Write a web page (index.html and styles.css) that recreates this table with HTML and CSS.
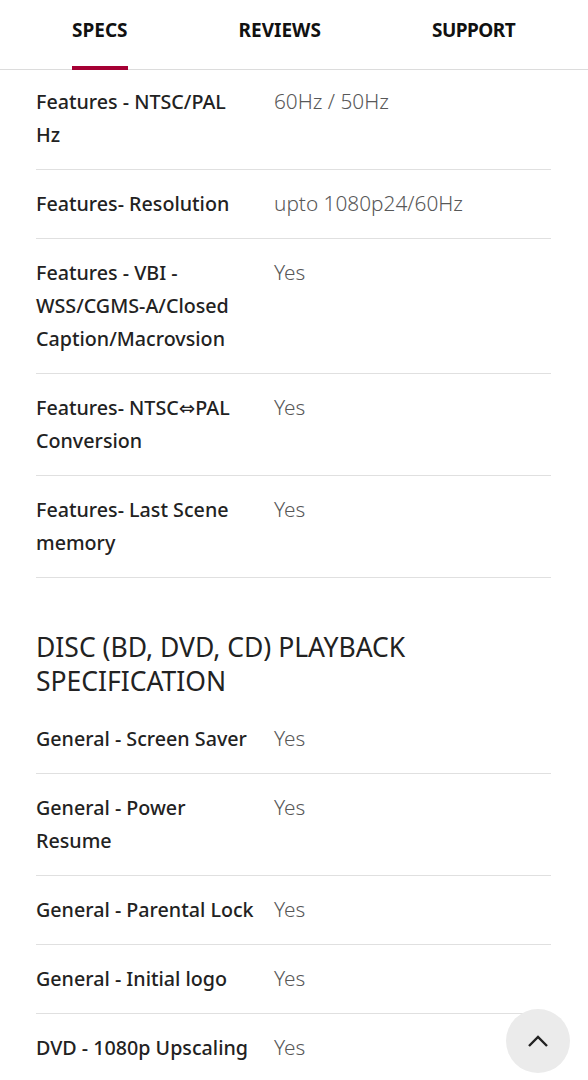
FILE: index.html
```html
<!DOCTYPE html>
<html lang="en">
<head>
<meta charset="utf-8">
<link rel="stylesheet" href="styles.css">
</head>
<body>
<nav class="tabs">
  <a class="tab active">SPECS</a>
  <a class="tab">REVIEWS</a>
  <a class="tab">SUPPORT</a>
</nav>
<main class="content">
  <dl class="spec-list first">
    <div class="row"><dt>Features - NTSC/PAL Hz</dt><dd>60Hz / 50Hz</dd></div>
    <div class="row"><dt>Features- Resolution</dt><dd>upto 1080p24/60Hz</dd></div>
    <div class="row"><dt>Features - VBI - WSS/CGMS-A/Closed Caption/Macrovsion</dt><dd>Yes</dd></div>
    <div class="row"><dt>Features- NTSC<span class="sym">⇔</span>PAL Conversion</dt><dd>Yes</dd></div>
    <div class="row"><dt>Features- Last Scene memory</dt><dd>Yes</dd></div>
  </dl>
  <h2 class="section-title">DISC (BD, DVD, CD) PLAYBACK SPECIFICATION</h2>
  <dl class="spec-list">
    <div class="row"><dt>General - Screen Saver</dt><dd>Yes</dd></div>
    <div class="row"><dt>General - Power Resume</dt><dd>Yes</dd></div>
    <div class="row"><dt>General - Parental Lock</dt><dd>Yes</dd></div>
    <div class="row"><dt>General - Initial logo</dt><dd>Yes</dd></div>
    <div class="row"><dt>DVD - 1080p Upscaling</dt><dd>Yes</dd></div>
  </dl>
</main>
<button class="to-top" aria-label="Back to top">
  <svg width="22" height="14" viewBox="0 0 22 14"><path d="M2 12 L11 3 L20 12" fill="none" stroke="#222" stroke-width="2.4"/></svg>
</button>
</body>
</html>
```
FILE: styles.css
```css
* { box-sizing: border-box; }
html, body { margin: 0; padding: 0; background: #fff; }
body {
  font-family: "Noto Sans", "Open Sans", sans-serif;
  color: #222;
  width: 588px;
  height: 1080px;
  overflow: hidden;
}
.tabs {
  display: flex;
  gap: 111px;
  padding-left: 72px;
  height: 70px;
  border-bottom: 1px solid #dcdcdc;
}
.tab {
  display: flex;
  align-items: center;
  height: 70px;
  padding-bottom: 6px;
  font-size: 19px;
  font-weight: 700;
  color: #111;
  border-bottom: 4px solid transparent;
}
.tab:last-child { letter-spacing: -0.5px; }
.tab.active { border-bottom-color: #a50034; }
.content { padding: 0 37px 0 36px; }
.spec-list { margin: 0; }
.row {
  display: grid;
  grid-template-columns: 218px 1fr;
  column-gap: 20px;
  padding: 17px 0 18px;
  border-bottom: 1px solid #e0e0e0;
  line-height: 33px;
}
.spec-list.first .row:first-child { padding-top: 15px; }
dt { font-size: 19.7px; font-weight: 500; color: #222; }
.sym { font-family: "DejaVu Sans", sans-serif; font-weight: 400; line-height: 1; }
dd { margin: 0; font-size: 20.8px; color: #585858; font-weight: 300; }
.section-title {
  margin: 52px 0 7px;
  font-size: 26.5px;
  line-height: 34px;
  font-weight: 400;
  color: #222;
}
.to-top {
  position: fixed;
  left: 506px;
  top: 1009px;
  width: 64px;
  height: 64px;
  border-radius: 50%;
  border: none;
  background: #ebebeb;
  display: flex;
  align-items: center;
  justify-content: center;
  padding: 0;
}
```
